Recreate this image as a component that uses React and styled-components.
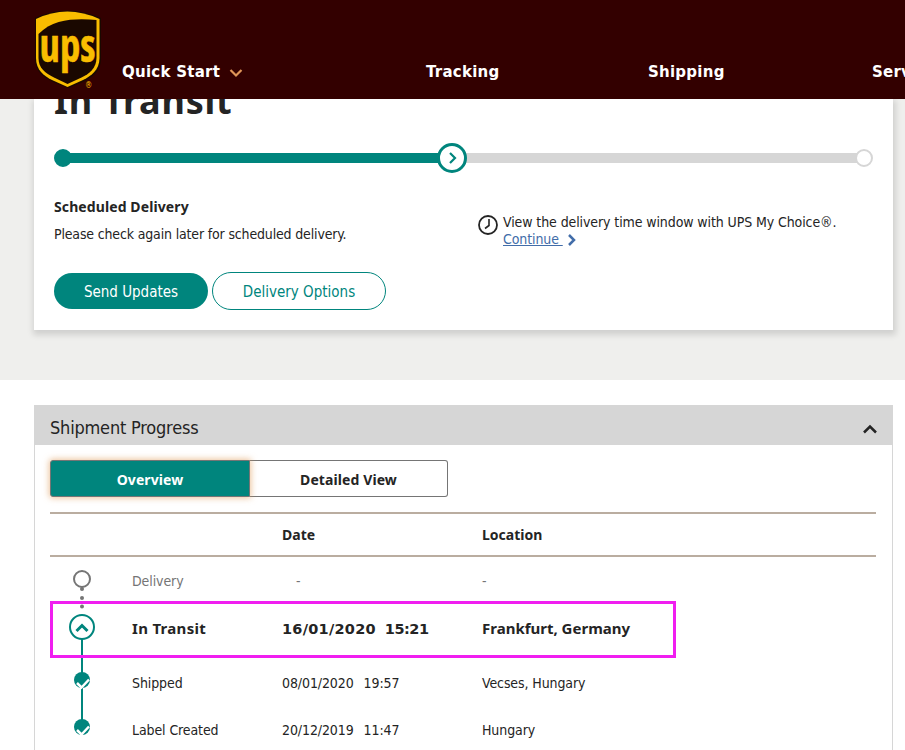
import styled, { createGlobalStyle } from "styled-components";

const GlobalStyle = createGlobalStyle`
  * {
    box-sizing: border-box;
  }
  body {
    margin: 0;
    background: #fff;
    color: #242424;
    font-family: "DejaVu Sans Condensed", "DejaVu Sans", sans-serif;
    font-stretch: condensed;
    font-size: 14px;
    overflow: hidden;
  }
`;

const Page = styled.div`
  width: 905px;
  height: 750px;
  overflow: hidden;
`;

const Header = styled.header`
  position: relative;
  z-index: 1;
  display: flex;
  height: 99px;
  padding-left: 34px;
  background: #330000;
  overflow: hidden;
`;

const Logo = styled.svg`
  flex: none;
  width: 68px;
  height: 80px;
  margin-top: 10px;
`;

const Nav = styled.nav`
  display: grid;
  grid-template-columns: 304px 222px 224px 120px;
  flex: none;
  margin: 61px 0 0 20px;
`;

const NavItem = styled.a`
  display: flex;
  align-items: center;
  height: 22px;
  color: #fff;
  font-family: "DejaVu Sans", sans-serif;
  font-stretch: normal;
  font-size: 15px;
  font-weight: bold;
  letter-spacing: 0.25px;
  svg {
    margin: 1px 0 0 9px;
  }
`;

const Hero = styled.section`
  height: 281px;
  padding: 0 12px 0 34px;
  background: #efefed;
`;

const Card = styled.div`
  height: 231px;
  padding: 0 20px;
  background: #fff;
  box-shadow: 1px 3px 6px 2px rgba(0, 0, 0, 0.13);
  display: flow-root;
`;

const Title = styled.h1`
  margin: -18px 0 22px;
  font-family: "Noto Sans", sans-serif;
  font-size: 36px;
  line-height: 40px;
  letter-spacing: 0.8px;
`;

const Track = styled.div`
  display: flex;
  align-items: center;
  height: 30px;
`;

const Dot = styled.span`
  flex: none;
  width: 18px;
  height: 18px;
  border-radius: 50%;
  border: 2px solid ${({ $done }) => ($done ? "#00857d" : "#d6d6d6")};
  background: ${({ $done }) => ($done ? "#00857d" : "#fff")};
`;

const Bar = styled.span`
  width: ${({ $width }) => $width};
  height: 10px;
  margin: 0 -2px;
  background: ${({ $done }) => ($done ? "#00857d" : "#d6d6d6")};
`;

const Current = styled.span`
  position: relative;
  display: flex;
  align-items: center;
  justify-content: center;
  flex: none;
  width: 30px;
  height: 30px;
  border: 3px solid #00857d;
  border-radius: 50%;
  background: #fff;
`;

const Details = styled.div`
  display: grid;
  grid-template-columns: 424px 1fr;
  margin-top: 24px;
`;

const Heading = styled.h2`
  margin: 0 0 7px;
  font-family: "Noto Sans", sans-serif;
  font-size: 14px;
  line-height: 20px;
  letter-spacing: 0.1px;
`;

const Text = styled.p`
  margin: 0;
  line-height: 20px;
  letter-spacing: -0.16px;
  white-space: nowrap;
`;

const Choice = styled.div`
  display: flex;
  align-items: flex-start;
  gap: 5px;
  margin-top: 17px;
  line-height: 17px;
  letter-spacing: -0.1px;
  white-space: nowrap;
  > svg {
    flex: none;
    margin-top: 1px;
  }
`;

const Link = styled.a`
  color: #426da9;
  text-decoration: underline;
  white-space: pre;
`;

const Chevron = styled.svg`
  margin-left: 4px;
  vertical-align: -2px;
`;

const Buttons = styled.div`
  display: flex;
  align-items: center;
  gap: 4px;
  margin-top: 24px;
`;

const Button = styled.button`
  width: ${({ $primary }) => ($primary ? "154px" : "174px")};
  height: ${({ $primary }) => ($primary ? "36px" : "38px")};
  padding: 2px 0 0;
  border: ${({ $primary }) => ($primary ? "none" : "1px solid #00857d")};
  border-radius: 19px;
  background: ${({ $primary }) => ($primary ? "#00857d" : "#fff")};
  color: ${({ $primary }) => ($primary ? "#fff" : "#00857d")};
  font-family: inherit;
  font-stretch: inherit;
  font-size: 15px;
  letter-spacing: 0;
`;

const Panel = styled.section`
  height: 400px;
  margin: 25px 12px 0 34px;
  border: 1px solid #d6d6d6;
  border-top: 0;
`;

const PanelHeader = styled.div`
  display: flex;
  align-items: center;
  justify-content: space-between;
  height: 40px;
  padding: 4px 15px 0;
  background: #d6d6d6;
  font-size: 18px;
  letter-spacing: -0.2px;
  svg {
    margin-top: 3px;
  }
`;

const Tabs = styled.div`
  display: flex;
  width: 398px;
  height: 37px;
  margin: 15px 0 15px 15px;
`;

const Tab = styled.button`
  width: ${({ $active }) => ($active ? "200px" : "198px")};
  padding: 2px 0 0;
  border: 1px solid #757575;
  border-left-width: ${({ $active }) => ($active ? "1px" : "0")};
  border-radius: ${({ $active }) => ($active ? "3px 0 0 3px" : "0 3px 3px 0")};
  background: ${({ $active }) => ($active ? "#00857d" : "#fff")};
  color: ${({ $active }) => ($active ? "#fff" : "#242424")};
  box-shadow: ${({ $active }) =>
    $active ? "0 0 6px 1px rgba(224, 155, 90, 0.6)" : "none"};
  z-index: ${({ $active }) => ($active ? 1 : 0)};
  font-family: "Noto Sans", sans-serif;
  font-size: 14px;
  font-weight: bold;
  letter-spacing: 0.1px;
`;

const Table = styled.div`
  margin: 0 16px 0 15px;
`;

const TableHead = styled.div`
  display: grid;
  grid-template-columns: 232px 200px 1fr;
  align-items: center;
  height: 45px;
  border-top: 2px solid #baada0;
  border-bottom: 2px solid #baada0;
  font-family: "Noto Sans", sans-serif;
  font-weight: bold;
`;

const TableBody = styled.div`
  position: relative;
  display: flex;
`;

const Timeline = styled.svg`
  flex: none;
  width: 82px;
  height: 195px;
`;

const Rows = styled.div`
  flex: 1;
`;

const Row = styled.div`
  display: grid;
  grid-template-columns: 150px 200px 1fr;
  align-items: center;
  height: 48px;
  letter-spacing: -0.1px;
  color: ${({ $pending }) => ($pending ? "#757575" : "#242424")};
`;

const CurrentRow = styled(Row)`
  margin-bottom: 6px;
  padding-bottom: 2px;
  font-family: "Noto Sans", sans-serif;
  font-size: 15px;
  font-weight: bold;
  letter-spacing: 0;
`;

const Status = styled.span`
  letter-spacing: 0.3px;
`;

const PlainRow = styled(Row)`
  height: 47px;
`;

const When = styled.span`
  display: flex;
  gap: 10px;
  padding-left: ${({ $empty }) => ($empty ? "14px" : "0")};
`;

const CurrentWhen = styled(When)`
  gap: 9px;
  padding-top: 2px;
  font-family: "DejaVu Sans", sans-serif;
  font-stretch: normal;
  font-size: 14.5px;
  letter-spacing: 0.25px;
  span:last-child {
    letter-spacing: -0.5px;
  }
`;

const Highlight = styled.div`
  position: absolute;
  top: 44px;
  left: 0;
  width: 626px;
  height: 57px;
  border: 3px solid #f01ef0;
`;

const UpsLogo = () => (
  <Logo viewBox="0 0 68 80">
    <path
      d="M1 8Q32 -7 67 8V49C67 62 57 68 49 72L34 78L19 72C9 67 1 61 1 49Z"
      fill="#1a0800"
    />
    <path
      d="M2 9Q33 -6 65.500 9V48C65.500 60 57 66 49 70L33.500 77L18 70C10 66 2 60 2 48Z"
      fill="#f9bd00"
    />
    <path
      d="M4.500 24C20 8 44 8.500 62.500 10V48C62.500 58 55 64 47.500 67.500L33.500 74L20 67.500C11 63 4.500 58 4.500 48Z"
      fill="#1a0800"
    />
    <text
      x="5.500"
      y="52"
      fill="#f9bd00"
      stroke="#f9bd00"
      strokeWidth="0.500"
      fontFamily="Open Sans"
      fontSize="47"
      fontWeight="700"
      textLength="56"
      lengthAdjust="spacingAndGlyphs"
    >
      ups
    </text>
    <text x="51" y="78" fill="#f9bd00" fontSize="8" fontFamily="DejaVu Sans">
      ®
    </text>
  </Logo>
);

const App = () => {
  return (
    <Page>
      <GlobalStyle />
      <Header>
        <UpsLogo />
        <Nav>
          <NavItem>
            Quick Start
            <svg width="14" height="10" fill="none" stroke="#df9558">
              <path d="M1.500 2L7 7.500L12.500 2" strokeWidth="2.200" />
            </svg>
          </NavItem>
          <NavItem>Tracking</NavItem>
          <NavItem>Shipping</NavItem>
          <NavItem>Services</NavItem>
        </Nav>
      </Header>

      <Hero>
        <Card>
          <Title>In Transit</Title>
          <Track>
            <Dot $done />
            <Bar $done $width="369px" />
            <Current>
              <svg width="10" height="14" fill="none" stroke="#00857d">
                <path d="M3 2L8 7L3 12" strokeWidth="2.200" />
              </svg>
            </Current>
            <Bar $width="392px" />
            <Dot />
          </Track>
          <Details>
            <div>
              <Heading>Scheduled Delivery</Heading>
              <Text>Please check again later for scheduled delivery.</Text>
            </div>
            <Choice>
              <svg width="20" height="20" fill="none" stroke="#242424">
                <circle cx="10" cy="10" r="9" strokeWidth="1.800" />
                <path d="M11 4V10.500L7 13.500" strokeWidth="1.600" />
              </svg>
              <div>
                View the delivery time window with UPS My Choice®.
                <br />
                <Link>Continue </Link>
                <Chevron width="10" height="12" fill="none" stroke="#426da9">
                  <path d="M2 1L7 6L2 11" strokeWidth="2.500" />
                </Chevron>
              </div>
            </Choice>
          </Details>
          <Buttons>
            <Button $primary>Send Updates</Button>
            <Button>Delivery Options</Button>
          </Buttons>
        </Card>
      </Hero>

      <Panel>
        <PanelHeader>
          Shipment Progress
          <svg width="14" height="10" fill="none" stroke="#242424">
            <path d="M1 8.500L7 2.500L13 8.500" strokeWidth="2.500" />
          </svg>
        </PanelHeader>
        <Tabs>
          <Tab $active>Overview</Tab>
          <Tab>Detailed View</Tab>
        </Tabs>
        <Table>
          <TableHead>
            <span />
            <span>Date</span>
            <span>Location</span>
          </TableHead>
          <TableBody>
            <Timeline fill="none">
              <circle cx="32" cy="22" r="8" stroke="#757575" strokeWidth="2" />
              <g fill="#757575">
                <circle cx="32" cy="32" r="2" />
                <circle cx="32" cy="41" r="2" />
                <circle cx="32" cy="49.500" r="2" />
              </g>
              <path d="M32 82V170" stroke="#00857d" strokeWidth="2" />
              <circle cx="32" cy="70" r="12" stroke="#00857d" strokeWidth="2" />
              <path d="M26.500 74L32 68.500L37.500 74" stroke="#00857d" strokeWidth="3" />
              <g fill="#00857d">
                <circle cx="32" cy="123" r="8" />
                <circle cx="32" cy="170" r="8" />
              </g>
              <g stroke="#fff" strokeWidth="2.500">
                <path d="M27 126L31.500 130.500L39 122.500" />
                <path d="M27 173L31.500 177.500L39 169.500" />
              </g>
            </Timeline>
            <Rows>
              <Row $pending>
                <span>Delivery</span>
                <When $empty>-</When>
                <span>-</span>
              </Row>
              <CurrentRow>
                <Status>In Transit</Status>
                <CurrentWhen>
                  <span>16/01/2020</span>
                  <span>15:21</span>
                </CurrentWhen>
                <span>Frankfurt, Germany</span>
              </CurrentRow>
              <PlainRow>
                <span>Shipped</span>
                <When>
                  <span>08/01/2020</span>
                  <span>19:57</span>
                </When>
                <span>Vecses, Hungary</span>
              </PlainRow>
              <PlainRow>
                <span>Label Created</span>
                <When>
                  <span>20/12/2019</span>
                  <span>11:47</span>
                </When>
                <span>Hungary</span>
              </PlainRow>
            </Rows>
            <Highlight />
          </TableBody>
        </Table>
      </Panel>
    </Page>
  );
};

export default App;
